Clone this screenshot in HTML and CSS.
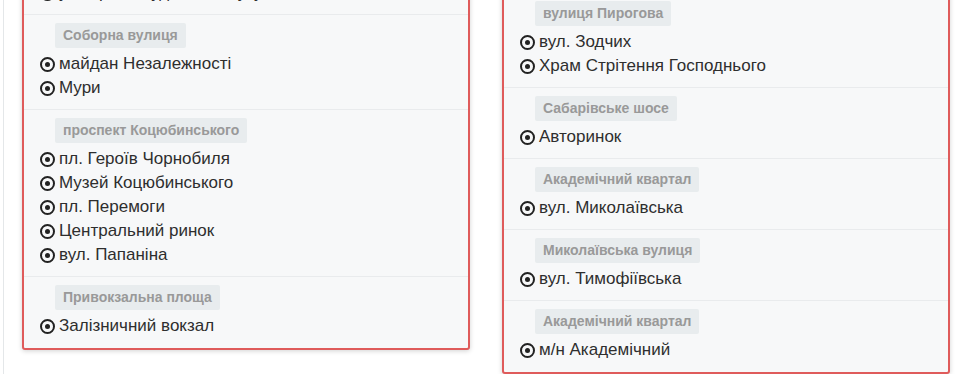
FILE: index.html
```html
<!DOCTYPE html>
<html lang="uk">
<head>
    <meta charset="UTF-8">
    <meta name="viewport" content="width=device-width, initial-scale=1.0">
    <title>Маршрут</title>
    <link rel="stylesheet" href="styles.css">
</head>
<body>
    <div class="page">
        <div class="routes">
            <div class="route-card">
                <div class="stop-group">
                    <span class="street">вулиця Пушкіна</span>
                    <div class="stop"><span class="dot"></span>вул. Пушкіна</div>
                    <div class="stop"><span class="dot"></span>універмаг Будинок побуту</div>
                </div>
                <div class="stop-group">
                    <span class="street">Соборна вулиця</span>
                    <div class="stop"><span class="dot"></span>майдан Незалежності</div>
                    <div class="stop"><span class="dot"></span>Мури</div>
                </div>
                <div class="stop-group">
                    <span class="street">проспект Коцюбинського</span>
                    <div class="stop"><span class="dot"></span>пл. Героїв Чорнобиля</div>
                    <div class="stop"><span class="dot"></span>Музей Коцюбинського</div>
                    <div class="stop"><span class="dot"></span>пл. Перемоги</div>
                    <div class="stop"><span class="dot"></span>Центральний ринок</div>
                    <div class="stop"><span class="dot"></span>вул. Папаніна</div>
                </div>
                <div class="stop-group">
                    <span class="street">Привокзальна площа</span>
                    <div class="stop"><span class="dot"></span>Залізничний вокзал</div>
                </div>
            </div>

            <div class="route-card route-card-right">
                <div class="stop-group">
                    <span class="street">Хмельницьке шосе</span>
                    <div class="stop"><span class="dot"></span>вул. Пирогова</div>
                </div>
                <div class="stop-group">
                    <span class="street">вулиця Пирогова</span>
                    <div class="stop"><span class="dot"></span>вул. Зодчих</div>
                    <div class="stop"><span class="dot"></span>Храм Стрітення Господнього</div>
                </div>
                <div class="stop-group">
                    <span class="street">Сабарівське шосе</span>
                    <div class="stop"><span class="dot"></span>Авторинок</div>
                </div>
                <div class="stop-group">
                    <span class="street">Академічний квартал</span>
                    <div class="stop"><span class="dot"></span>вул. Миколаївська</div>
                </div>
                <div class="stop-group">
                    <span class="street">Миколаївська вулиця</span>
                    <div class="stop"><span class="dot"></span>вул. Тимофіївська</div>
                </div>
                <div class="stop-group">
                    <span class="street">Академічний квартал</span>
                    <div class="stop"><span class="dot"></span>м/н Академічний</div>
                </div>
            </div>
        </div>
    </div>
</body>
</html>
```

FILE: styles.css
```css
body {
    font-family: 'Liberation Sans', Arial, sans-serif;
    margin: 0;
    padding: 0 0 0 3px;
    color: #333;
    background-color: #fff;
    overflow: hidden;
}
.page {
    border-left: 1px solid #e4e7e9;
    min-height: 382px;
    padding-left: 18px;
}
.routes {
    display: flex;
    align-items: flex-start;
    gap: 32px;
    margin-top: -82px;
}
.route-card {
    width: 448px;
    box-sizing: border-box;
    background-color: #f7f8f9;
    border: 2px solid #df5b5b;
    border-radius: 3px;
    box-shadow: 0 1px 5px rgba(0, 0, 0, 0.18);
}
.route-card-right {
    margin-top: 2px;
}
.route-card .stop-group:last-child {
    padding-bottom: 10px;
}
.stop-group {
    padding: 8px 3px 9px 16px;
    border-top: 1px solid #e9ebed;
}
.stop-group:first-child {
    border-top: none;
}
.street {
    display: inline-block;
    margin: 0 0 4px 15px;
    padding: 4px 8px;
    font-size: 14px;
    line-height: 17px;
    font-weight: 700;
    color: #999;
    background-color: #e8ecee;
    border-radius: 2px;
}
.stop {
    display: flex;
    align-items: center;
    font-size: 17px;
    line-height: 24px;
    color: #2e2e2e;
}
.dot {
    display: flex;
    align-items: center;
    justify-content: center;
    width: 15px;
    height: 15px;
    box-sizing: border-box;
    border: 2.5px solid #222;
    border-radius: 50%;
    margin-right: 4px;
    flex-shrink: 0;
}
.dot::after {
    content: "";
    width: 5px;
    height: 5px;
    border-radius: 50%;
    background-color: #222;
}
```
